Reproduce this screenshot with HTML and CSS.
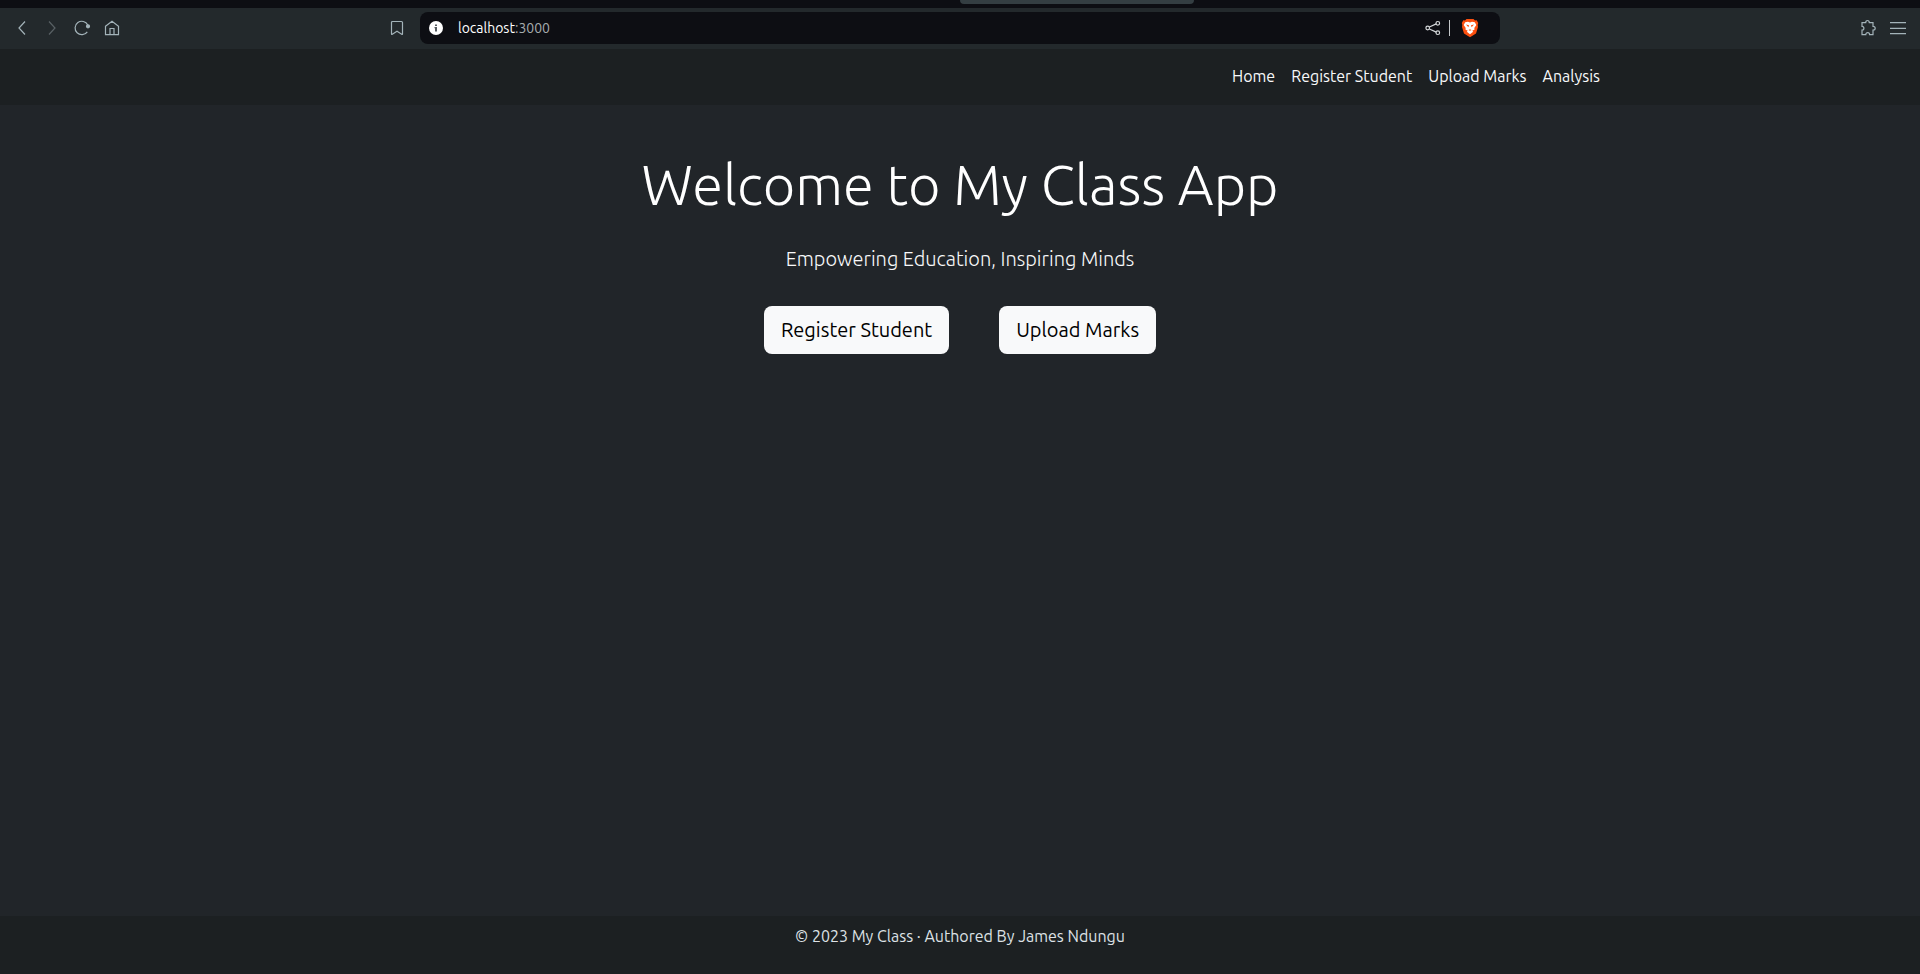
FILE: index.html
```
<!DOCTYPE html>
<html lang="en">
<head>
<meta charset="utf-8">
<title>My Class App</title>
<link rel="stylesheet" href="styles.css">
</head>
<body>
<div class="tab-strip"><div class="tab"></div></div>
<div class="toolbar">
  <div class="tools">
    <button class="tool" aria-label="Back"><svg viewBox="0 0 18 18"><path d="M12 2.500 6 9l6 6.500"/></svg></button>
    <button class="tool dim" aria-label="Forward"><svg viewBox="0 0 18 18"><path d="m6 2.500 6 6.500-6 6.500"/></svg></button>
    <button class="tool" aria-label="Reload"><svg viewBox="0 0 18 18"><path d="M14.300 12.800A6.700 6.700 0 1 1 14.800 6"/><circle class="fill" cx="15" cy="7.300" r="1.500"/></svg></button>
    <button class="tool" aria-label="Home page"><svg viewBox="0 0 18 18"><path d="M2.500 7.200 9 2.300l6.500 4.900v8.500h-13zM7 15.700V9.500h4v6.200"/></svg></button>
  </div>
  <div class="location">
    <button class="tool" aria-label="Bookmark"><svg viewBox="0 0 18 18"><path d="M3.500 3.500q0-1 1-1h9q1 0 1 1v11.300q0 1-.8.500L9 12.300l-4.700 3q-.8.500-.8-.5z"/></svg></button>
    <div class="address">
      <svg class="info" viewBox="0 0 14 14"><circle cx="7" cy="7" r="7" fill="#fff"/><path d="M6 3.500h2v1.500H6zM5.500 6H8v4.500H6V7.200h-.5z" fill="#555b60"/></svg>
      <span class="url"><span class="host">localhost</span><span>:3000</span></span>
      <button class="tool share" aria-label="Share"><svg viewBox="0 0 18 18"><path d="M5.400 8 12.200 4.900M5.400 10l6.800 3.100"/><circle cx="3.700" cy="9" r="1.800"/><circle cx="13.800" cy="4.300" r="1.800"/><circle cx="13.800" cy="13.700" r="1.800"/></svg></button>
      <span class="divider"></span>
      <button class="tool brave" aria-label="Brave Shields"><svg viewBox="0 0 18 20"><path d="M5.500 1h7l1.500 1.500 1.700-.2L17.200 5l-.5 2 .3 2-2 6.500L9 19.300 3 15.500 1 9l.3-2-.5-2 1.500-2.700 1.700.2z" fill="#fb4f0f"/><path d="M4.200 4.300 7 3.800l2 .7 2-.7 2.800.5 1.500 2.700-2 3 .3 1.500-2.400 1.200 1 1L9 16.200l-3.200-2.500 1-1L4.400 11.500l.3-1.500-2-3z" fill="#fff"/><path d="m5 6.600 3 .6-.6 2zM13 6.600l-3 .6.600 2zM7.500 12 9 11.200l1.500.8-1.500.8z" fill="#fb4f0f"/></svg></button>
    </div>
  </div>
  <div class="tools end">
    <button class="tool" aria-label="Extensions"><svg viewBox="0 0 18 18"><path d="M3 3.700h3.700c0-1.600.8-2.200 1.800-2.200s1.800.6 1.800 2.200H14v3.600c1.500 0 2.200.9 2.200 1.900s-.7 1.900-2.200 1.900v4.600h-3.400c0-1.400-.9-2-1.900-2s-1.900.6-1.900 2H3v-4.600c1.300 0 1.900-.9 1.900-1.900S4.300 7.300 3 7.300z"/></svg></button>
    <button class="tool" aria-label="Menu"><svg viewBox="0 0 18 18"><path d="M1 3.700h16M1 9.300h16M1 14.700h16"/></svg></button>
  </div>
</div>
<header class="navbar">
  <nav class="container">
    <a href="#">Home</a>
    <a href="#">Register Student</a>
    <a href="#">Upload Marks</a>
    <a href="#">Analysis</a>
  </nav>
</header>
<main class="hero">
  <h1>Welcome to My Class App</h1>
  <p class="lead">Empowering Education, Inspiring Minds</p>
  <div class="actions">
    <a class="btn" href="#">Register Student</a>
    <a class="btn" href="#">Upload Marks</a>
  </div>
</main>
<footer class="footer">
  <p>© 2023 My Class · Authored By James Ndungu</p>
</footer>
</body>
</html>
```
FILE: styles.css
```
* { box-sizing: border-box; }
body {
  margin: 0;
  min-height: 100vh;
  display: flex;
  flex-direction: column;
  background: #212529;
  color: #f8f9fa;
  font: 16px/24px Ubuntu, "Noto Sans", sans-serif;
}
h1, p { margin: 0; }
a { color: inherit; text-decoration: none; }

.tab-strip { height: 8px; background: #0d0e13; }
.tab { width: 234px; height: 4px; margin-left: 50%; background: #343e42; border-radius: 0 0 8px 8px; }

.toolbar {
  display: grid;
  grid-template-columns: 375fr 1113fr 408fr;
  align-items: center;
  padding: 4px 12px 5px;
  background: #23292c;
}
.tools { display: flex; gap: 10px; }
.end { justify-content: flex-end; }
.tool {
  display: flex;
  align-items: center;
  justify-content: center;
  width: 20px;
  height: 20px;
  padding: 0;
  border: 0;
  background: none;
  color: #a3b3b9;
}
.tool svg { width: 18px; height: 18px; fill: none; stroke: currentColor; stroke-width: 1.2; }
.tool .fill { fill: currentColor; }
.dim { color: #596165; }
.location { display: flex; align-items: center; gap: 13px; }
.address {
  flex: 1;
  display: flex;
  align-items: center;
  height: 32px;
  padding: 0 20px 0 9px;
  border-radius: 8px;
  background: #0d0e13;
}
.info { width: 14px; height: 14px; margin-right: 15px; }
.url { flex: 1; font-size: 14px; line-height: 20px; color: #a5abae; }
.host { color: #fff; }
.share { color: #d5d8da; }
.divider { width: 1px; height: 16px; margin: 0 10px 0 6px; background: #c4c7c9; }
.tool.brave svg { height: 20px; stroke: none; }

.navbar { padding: 7px 0 9px; background: #1c2022; }
.container {
  display: flex;
  justify-content: flex-end;
  max-width: 1320px;
  margin: 0 auto;
  padding: 0 12px;
}
.container a { padding: 8px; }

.hero {
  flex: 1;
  display: flex;
  flex-direction: column;
  align-items: center;
  padding-top: 46px;
}
.hero h1 { font-size: 56px; font-weight: 300; line-height: 67px; margin-bottom: 26px; color: #fff; }
.lead { font-size: 20px; font-weight: 300; line-height: 30px; margin-bottom: 32px; }
.actions { display: flex; gap: 50px; }
.btn {
  padding: 9px 17px;
  border-radius: 8px;
  background: #f8f9fa;
  color: #000;
  font-size: 20px;
  line-height: 30px;
}
.footer { padding: 8px 0 26px; background: #1c2022; color: #dee2e6; text-align: center; }
```
